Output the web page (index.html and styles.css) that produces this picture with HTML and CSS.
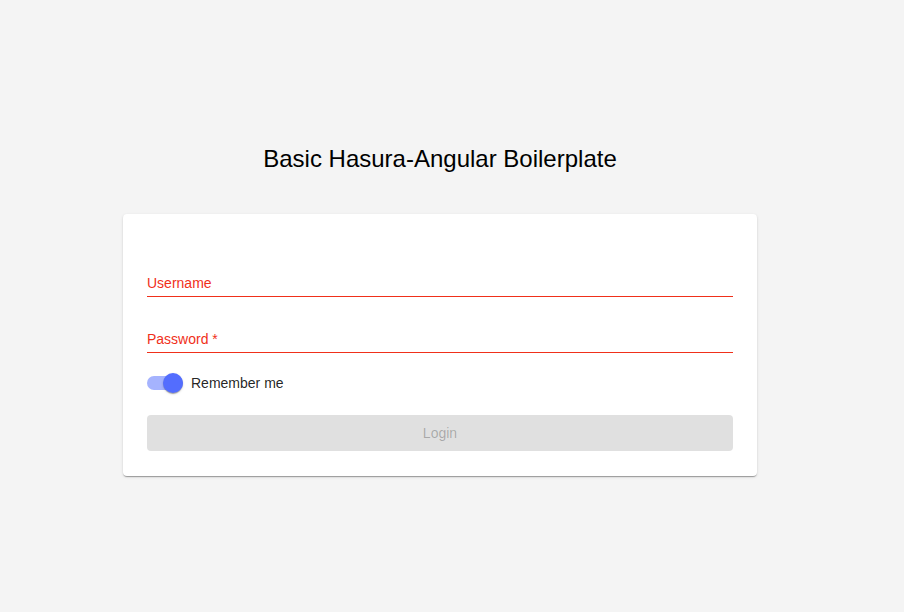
FILE: index.html
```html
<!DOCTYPE html>
<html lang="en">
<head>
<meta charset="utf-8">
<title>Basic Hasura-Angular Boilerplate</title>
<link rel="stylesheet" href="styles.css">
</head>
<body>
<main class="page">
  <h1 class="title">Basic Hasura-Angular Boilerplate</h1>
  <form class="card">
    <label class="field">
      <span class="field-label">Username</span>
    </label>
    <label class="field">
      <span class="field-label">Password *</span>
    </label>
    <div class="toggle-row">
      <span class="toggle">
        <span class="toggle-track"></span>
        <span class="toggle-thumb"></span>
      </span>
      <span class="toggle-label">Remember me</span>
    </div>
    <button class="login" type="button" disabled>Login</button>
  </form>
</main>
</body>
</html>
```

FILE: styles.css
```css
html, body {
  margin: 0;
  padding: 0;
  background: #f4f4f4;
  height: 100%;
}

.page {
  display: flex;
  flex-direction: column;
  align-items: center;
  padding: 145px 24px 0 0;
}

.title {
  margin: 0 0 41px;
  font-family: "Liberation Sans", Arial, sans-serif;
  font-weight: 400;
  font-size: 24px;
  line-height: 28px;
  color: #000;
}

.card {
  box-sizing: border-box;
  width: 634px;
  background: #fff;
  border-radius: 4px;
  padding: 27px 24px 25px;
  box-shadow: 0 2px 1px -1px rgba(0,0,0,.2), 0 1px 1px 0 rgba(0,0,0,.14), 0 1px 3px 0 rgba(0,0,0,.12);
  display: flex;
  flex-direction: column;
  font-family: "Liberation Sans", Arial, sans-serif;
}

.field {
  display: block;
  padding-top: 34px;
  padding-bottom: 5px;
  border-bottom: 1px solid #f0301a;
}

.field-label {
  display: block;
  font-size: 14px;
  line-height: 16px;
  color: #f0301a;
}

.toggle-row {
  display: flex;
  align-items: center;
  height: 24px;
  margin-top: 18px;
}

.toggle {
  position: relative;
  width: 36px;
  height: 24px;
  display: flex;
  align-items: center;
}

.toggle-track {
  display: block;
  width: 36px;
  height: 14px;
  border-radius: 8px;
  background: #a5b3fe;
}

.toggle-thumb {
  position: absolute;
  left: 16px;
  top: 2px;
  width: 20px;
  height: 20px;
  border-radius: 50%;
  background: #536dfe;
  box-shadow: 0 2px 1px -1px rgba(0,0,0,.2), 0 1px 1px 0 rgba(0,0,0,.14), 0 1px 3px 0 rgba(0,0,0,.12);
}

.toggle-label {
  margin-left: 8px;
  font-size: 14px;
  color: rgba(0,0,0,.87);
}

.login {
  margin-top: 20px;
  height: 36px;
  border: 0;
  border-radius: 4px;
  background: #e0e0e0;
  color: rgba(0,0,0,.26);
  font-family: "Liberation Sans", Arial, sans-serif;
  font-size: 14px;
  font-weight: 400;
  padding: 0 16px;
}
```
